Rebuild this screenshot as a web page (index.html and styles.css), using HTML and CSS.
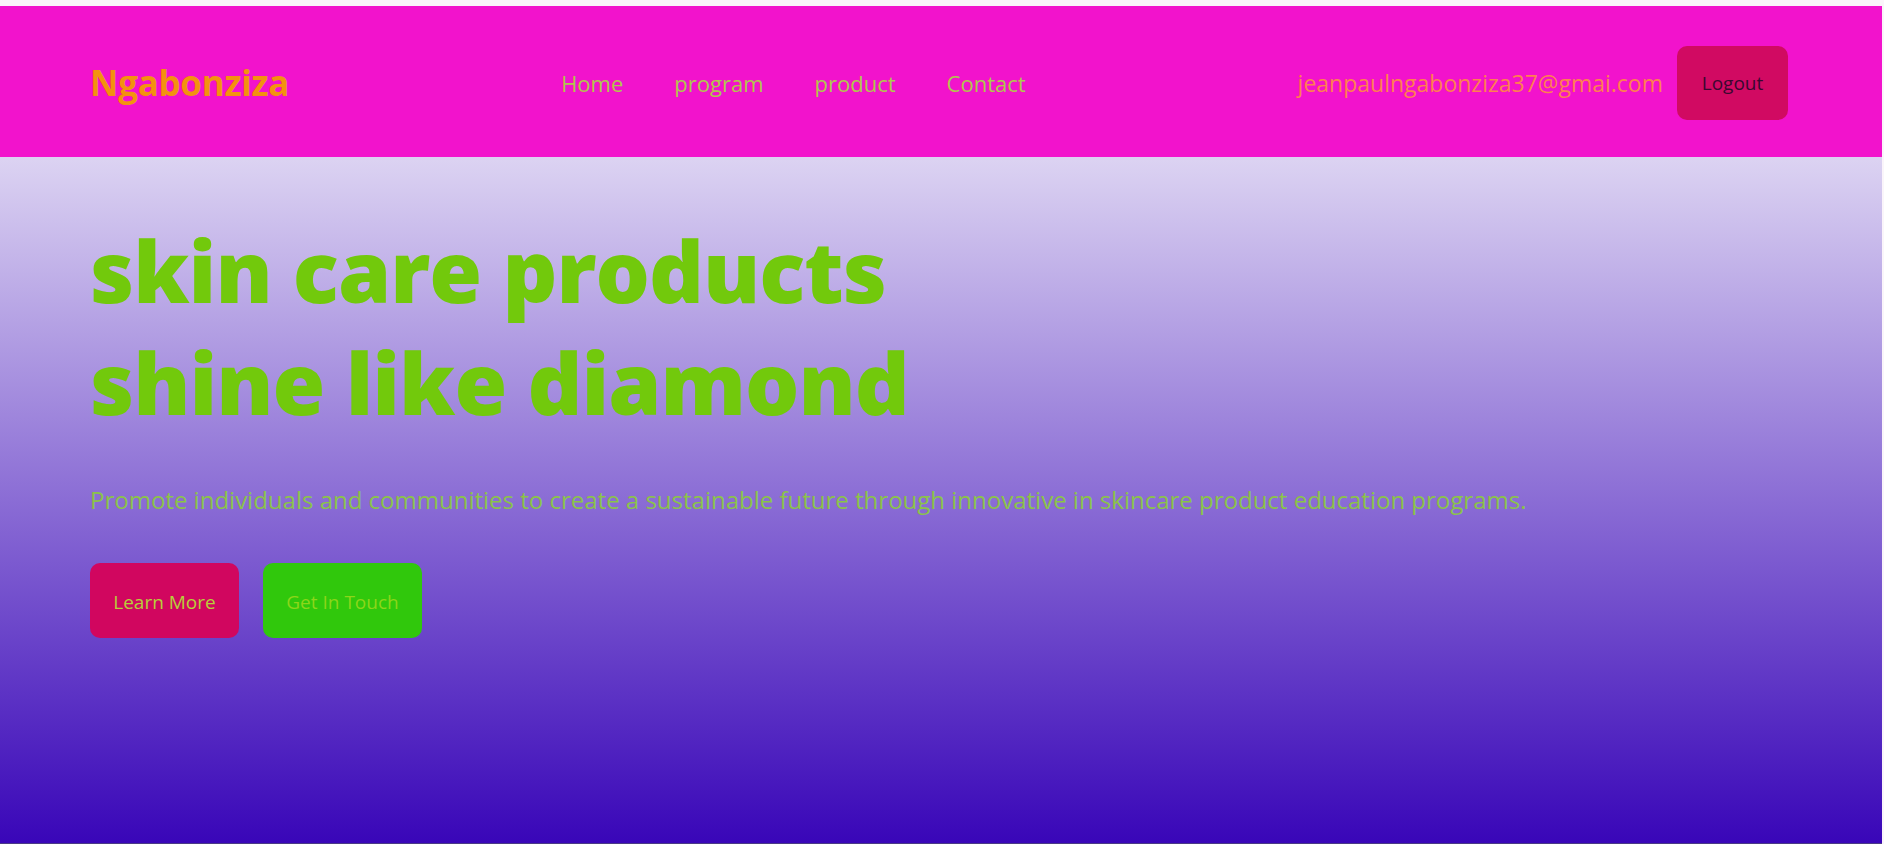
FILE: index.html
```html
<!DOCTYPE html>
<html lang="en">
<head>
<meta charset="utf-8">
<title>Ngabonziza</title>
<link rel="stylesheet" href="styles.css">
</head>
<body>
<div class="page">
  <header class="topbar">
    <div class="logo">Ngabonziza</div>
    <nav class="nav">
      <a href="#">Home</a>
      <a href="#">program</a>
      <a href="#">product</a>
      <a href="#">Contact</a>
    </nav>
    <div class="account">
      <span class="email">jeanpaulngabonziza37@gmai.com</span>
      <button class="btn btn-logout">Logout</button>
    </div>
  </header>
  <section class="hero">
    <h1 class="hero-title">skin care products<br>shine like diamond</h1>
    <p class="hero-text">Promote individuals and communities to create a sustainable future through innovative in skincare product education programs.</p>
    <div class="hero-actions">
      <button class="btn btn-learn">Learn More</button>
      <button class="btn btn-touch">Get In Touch</button>
    </div>
  </section>
</div>
</body>
</html>
```
FILE: styles.css
```css
* { box-sizing: border-box; }
html, body { margin: 0; padding: 0; }
body {
  background: #faf5fa;
  font-family: "Open Sans", "Noto Sans", sans-serif;
  overflow: hidden;
}
.page {
  width: 1882px;
  padding-top: 6px;
}
.topbar {
  height: 151px;
  background: #f213cc;
  display: flex;
  align-items: center;
  justify-content: space-between;
  padding: 2px 94px 0 90px;
}
.logo {
  color: #f3920f;
  font-weight: 700;
  font-size: 35px;
  letter-spacing: -0.3px;
}
.nav {
  display: flex;
  gap: 51px;
}
.nav a {
  color: #b0c64e;
  text-decoration: none;
  font-size: 22px;
}
.account {
  display: flex;
  align-items: center;
  gap: 14px;
}
.email {
  color: #ff7f50;
  font-size: 23px;
}
.btn {
  border: none;
  border-radius: 10px;
  font-family: inherit;
  font-size: 19px;
  height: 74px;
  padding: 0 24px;
  cursor: pointer;
}
.btn-logout {
  background: #d10a62;
  color: #3a0830;
  width: 111px;
  padding: 0;
}
.hero {
  height: 687px;
  background: linear-gradient(to bottom, #dcd3f2 0%, #3906b8 100%);
  padding: 57px 0 0 90px;
  border-bottom: 1px solid #4a3a84;
}
.hero-title {
  margin: 0;
  color: #72c90c;
  font-weight: 800;
  font-size: 85.5px;
  line-height: 112px;
  letter-spacing: -1px;
}
.hero-text {
  margin: 45px 0 0;
  color: #8bc34a;
  font-size: 24px;
  line-height: 33px;
}
.hero-actions {
  display: flex;
  gap: 24px;
  margin-top: 47px;
}
.hero-actions .btn {
  height: 75px;
  padding-top: 2px;
}
.btn-learn {
  background: #d1065f;
  color: #b7cf3a;
  width: 149px;
  padding: 0;
}
.btn-touch {
  background: #30c80c;
  color: #8cd61a;
  width: 159px;
  padding: 0;
}
```
